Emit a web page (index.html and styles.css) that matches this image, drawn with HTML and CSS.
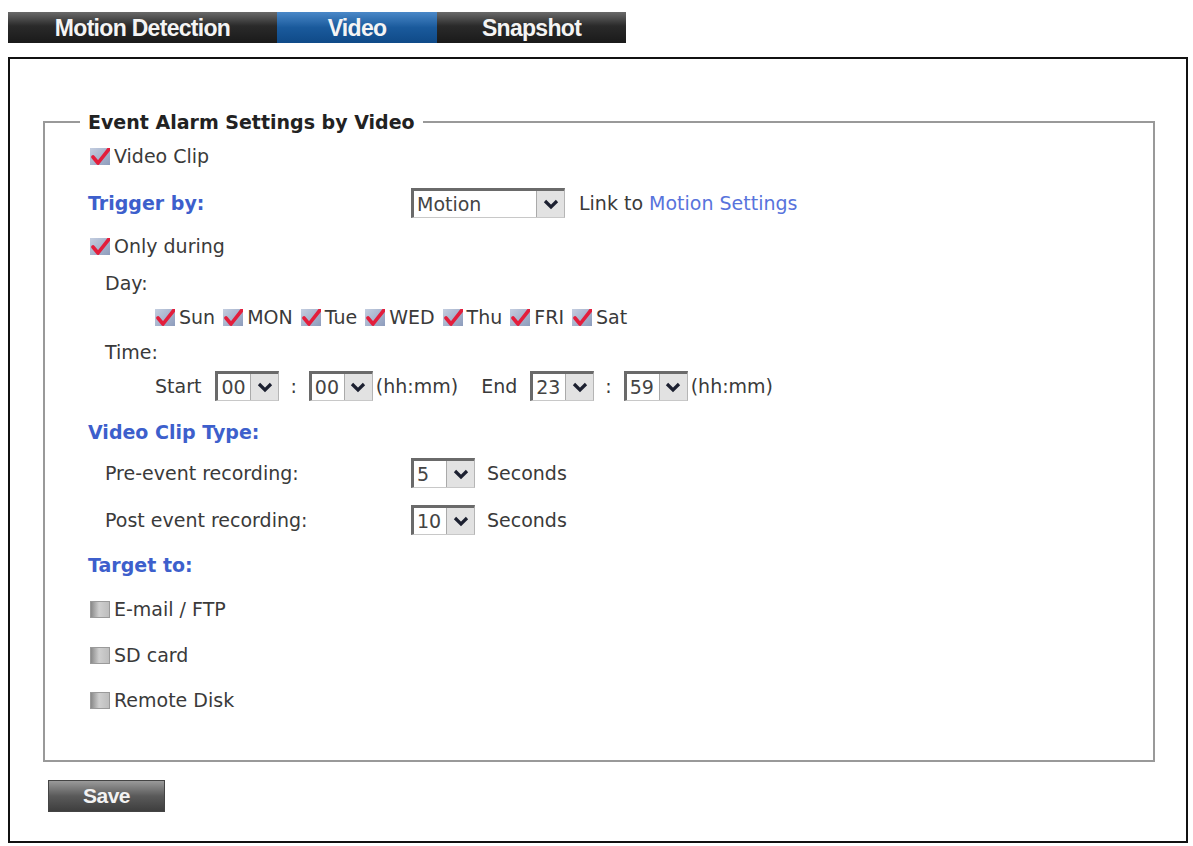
FILE: index.html
```html
<!DOCTYPE html>
<html lang="en">
<head>
    <meta charset="UTF-8">
    <title>Event Alarm Settings by Video</title>
    <link rel="stylesheet" href="styles.css">
</head>
<body>
    <div class="tabs">
        <div class="tab tab-motion">Motion Detection</div>
        <div class="tab tab-video active">Video</div>
        <div class="tab tab-snap">Snapshot</div>
    </div>

    <div class="panel">
        <fieldset class="settings">
            <legend>Event Alarm Settings by Video</legend>

            <div class="row r-clip">
                <span class="check on"></span>Video Clip
            </div>

            <div class="row r-trigger">
                <span class="label-blue col-label">Trigger by:</span>
                <span class="sel sel-motion"><span class="val">Motion</span><span class="arrow"></span></span>
                <span class="link-text">Link to <span class="link">Motion Settings</span></span>
            </div>

            <div class="row r-only">
                <span class="check on"></span>Only during
            </div>

            <div class="row r-day indent">Day:</div>

            <div class="row r-days indent2">
                <span class="day"><span class="check on"></span>Sun</span>
                <span class="day"><span class="check on"></span>MON</span>
                <span class="day"><span class="check on"></span>Tue</span>
                <span class="day"><span class="check on"></span>WED</span>
                <span class="day"><span class="check on"></span>Thu</span>
                <span class="day"><span class="check on"></span>FRI</span>
                <span class="day"><span class="check on"></span>Sat</span>
            </div>

            <div class="row r-time indent">Time:</div>

            <div class="row r-start indent2">
                <span class="start-label">Start</span>
                <span class="sel sel-small"><span class="val">00</span><span class="arrow"></span></span>
                <span class="colon">:</span>
                <span class="sel sel-small"><span class="val">00</span><span class="arrow"></span></span>
                <span class="hint">(hh:mm)</span>
                <span class="end-label">End</span>
                <span class="sel sel-small"><span class="val">23</span><span class="arrow"></span></span>
                <span class="colon">:</span>
                <span class="sel sel-small"><span class="val">59</span><span class="arrow"></span></span>
                <span class="hint">(hh:mm)</span>
            </div>

            <div class="row r-type">
                <span class="label-blue">Video Clip Type:</span>
            </div>

            <div class="row r-pre indent">
                <span class="col-label2">Pre-event recording:</span>
                <span class="sel sel-sec"><span class="val">5</span><span class="arrow"></span></span>
                <span class="unit">Seconds</span>
            </div>

            <div class="row r-post indent">
                <span class="col-label2">Post event recording:</span>
                <span class="sel sel-sec"><span class="val">10</span><span class="arrow"></span></span>
                <span class="unit">Seconds</span>
            </div>

            <div class="row r-target">
                <span class="label-blue">Target to:</span>
            </div>

            <div class="row r-mail"><span class="check off"></span>E-mail / FTP</div>
            <div class="row r-sd"><span class="check off"></span>SD card</div>
            <div class="row r-remote"><span class="check off"></span>Remote Disk</div>
        </fieldset>

        <button class="save">Save</button>
    </div>
</body>
</html>
```

FILE: styles.css
```css
body {
    margin: 0;
    padding: 12px 5px 0 8px;
    background: #fff;
    font-family: "DejaVu Sans", Verdana, sans-serif;
    font-size: 19px;
    color: #3a3a3a;
}

/* top tab strip */
.tabs {
    display: flex;
    width: 618px;
    height: 31px;
    background: linear-gradient(#6a6a6a, #2a2a2a 45%, #1a1a1a);
}

.tab {
    display: flex;
    align-items: center;
    justify-content: center;
    color: #f4f4f4;
    font-family: "Liberation Sans", Arial, sans-serif;
    font-weight: bold;
    font-size: 23px;
    letter-spacing: -0.7px;
    padding-top: 1px;
}

.tab-motion { width: 269px; }
.tab-video { width: 160px; }
.tab-snap { width: 189px; }

.tab.active {
    background: linear-gradient(#4a88c8, #1a5a9c 50%, #0f4a88);
}

/* main box */
.panel {
    margin-top: 14px;
    width: 1180px;
    height: 786px;
    box-sizing: border-box;
    border: 2px solid #111;
    padding: 53px 0 0 33px;
}

.settings {
    width: 1112px;
    height: 650px;
    box-sizing: border-box;
    margin: 0;
    border: 2px solid #999;
    padding: 7px 0 0 43px;
}

.settings legend {
    font-weight: bold;
    font-size: 19px;
    color: #222;
    line-height: 20px;
    padding: 0 8px;
    margin-left: -8px;
}

.row {
    display: flex;
    align-items: center;
    height: 34px;
    white-space: nowrap;
}

.r-trigger { margin-top: 13px; }
.r-only { margin-top: 9px; }
.r-day { margin-top: 3px; }
.r-days { margin-top: 0; }
.r-time { margin-top: 1px; }
.r-start { margin-top: 0; }
.r-type { margin-top: 12px; }
.r-pre { margin-top: 7px; }
.r-post { margin-top: 13px; }
.r-target { margin-top: 11px; }
.r-mail { margin-top: 10px; }
.r-sd { margin-top: 12px; }
.r-remote { margin-top: 11px; }

.indent { padding-left: 17px; }
.indent2 { padding-left: 67px; }

.label-blue {
    color: #3d5fcc;
    font-weight: bold;
}

.col-label { width: 323px; }
.col-label2 { width: 306px; }

/* checkboxes */
.check {
    display: inline-block;
    width: 20px;
    height: 17px;
    margin: 0 4px 0 2px;
    flex: none;
}

.check.on {
    background: url("data:image/svg+xml;utf8,<svg xmlns='http://www.w3.org/2000/svg' viewBox='0 0 20 17'><path d='M3 9 L8 15 L19 1' fill='none' stroke='%23e31e3c' stroke-width='3.6' stroke-linecap='round' stroke-linejoin='round'/></svg>") no-repeat center,
                linear-gradient(135deg, #c4cee0, #8d9cbc);
}

.check.off {
    background: linear-gradient(90deg, #8a8a8a, #cfcfcf 45%, #bdbdbd);
    border: 1px solid #9a9a9a;
    box-sizing: border-box;
}

.day {
    display: inline-flex;
    align-items: center;
    margin-right: 8px;
}

.day .check { margin-left: 0; }

/* fake selects */
.sel {
    display: inline-flex;
    height: 30px;
    box-sizing: border-box;
    border-top: 3px solid #6a6a6a;
    border-left: 3px solid #6a6a6a;
    border-right: 1px solid #b5b5b5;
    border-bottom: 1px solid #c8c8c8;
    background: #fff;
    flex: none;
}

.sel .val {
    flex: 1;
    display: flex;
    align-items: center;
    padding-left: 3px;
    color: #444;
}

.sel .arrow {
    width: 27px;
    background: #e2e2e2 url("data:image/svg+xml;utf8,<svg xmlns='http://www.w3.org/2000/svg' viewBox='0 0 26 26'><path d='M7 10 L13 16 L19 10' fill='none' stroke='%231c2030' stroke-width='3.2'/></svg>") no-repeat center;
    border-left: 1px solid #aaa;
}

.sel-motion { width: 154px; margin-right: 14px; }
.sel-small { width: 64px; }
.sel-sec { width: 64px; margin-right: 12px; }

.link { color: #5873dc; }

.start-label { margin-right: 14px; }
.colon { margin: 0 12px 0 11px; }
.hint { margin-left: 3px; }
.end-label { margin: 0 13px 0 23px; }

/* save button */
.save {
    display: block;
    margin: 18px 0 0 5px;
    width: 117px;
    height: 32px;
    border: 1px solid #444;
    background: linear-gradient(#9a9a9a, #5a5a5a 50%, #3e3e3e);
    color: #f2f2f2;
    font-family: "Liberation Sans", Arial, sans-serif;
    font-weight: bold;
    font-size: 21px;
    letter-spacing: -0.5px;
    cursor: pointer;
}
```
